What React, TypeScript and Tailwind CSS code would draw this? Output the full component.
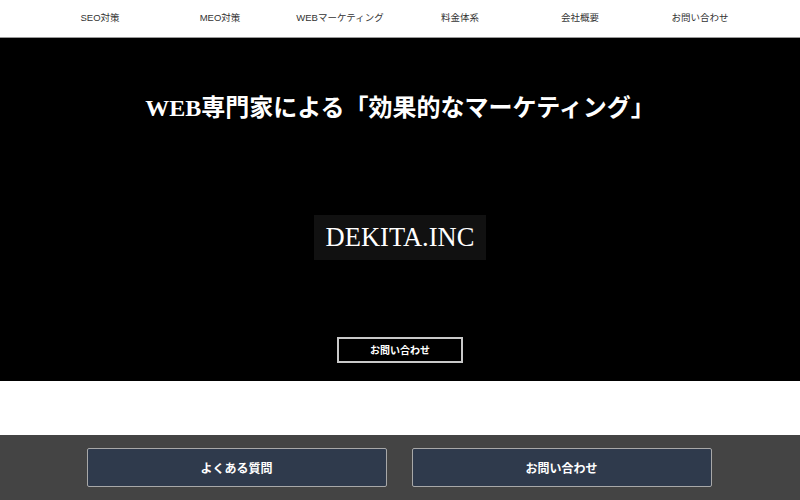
import React from 'react'

const navItems = ['SEO対策', 'MEO対策', 'WEBマーケティング', '料金体系', '会社概要', 'お問い合わせ']

const sans = "font-['Helvetica_Neue','Liberation_Sans','Noto_Sans_CJK_JP',sans-serif]"
const serif = "font-['Liberation_Serif','Noto_Sans_CJK_JP',serif]"

export default function App() {
  return (
    <div className={`w-[800px] h-[500px] flex flex-col bg-white overflow-hidden ${sans}`}>
      {/* Top navigation */}
      <header className="h-[38px] shrink-0 border-b border-[#9a9a9a] bg-white">
        <nav className="mx-auto w-[720px] h-full grid grid-cols-6">
          {navItems.map((item) => (
            <a
              key={item}
              href="#"
              className={`flex items-center justify-center pb-[1px] text-[9.5px] text-[#333] ${sans}`}
            >
              {item}
            </a>
          ))}
        </nav>
      </header>

      {/* Hero */}
      <section className="h-[343px] shrink-0 bg-black flex flex-col items-center">
        <h1 className={`mt-[53px] text-[24px] leading-[34px] font-bold text-white ${serif}`}>
          WEB専門家による「効果的なマーケティング」
        </h1>
        <div className={`mt-[90px] h-[45px] px-[12px] flex items-center bg-[#111] text-[26.5px] text-white ${serif}`}>
          DEKITA.INC
        </div>
        <a
          href="#"
          className="mt-[77px] w-[126px] h-[26px] flex items-center justify-center border-2 border-[#c8c8c8] text-[10px] font-bold text-white"
        >
          お問い合わせ
        </a>
      </section>

      <div className="h-[54px] shrink-0 bg-white" />

      {/* Bottom action bar */}
      <footer className="flex-1 bg-[#444] flex items-center justify-center gap-[25px] pr-[2px]">
        <a
          href="#"
          className="w-[300px] h-[39px] flex items-center justify-center rounded-[2px] border border-[#a8a8a8] bg-[#2f3a4c] pt-[2px] text-[12px] font-bold text-white"
        >
          よくある質問
        </a>
        <a
          href="#"
          className="w-[300px] h-[39px] flex items-center justify-center rounded-[2px] border border-[#a8a8a8] bg-[#2f3a4c] pt-[2px] text-[12px] font-bold text-white"
        >
          お問い合わせ
        </a>
      </footer>
    </div>
  )
}
